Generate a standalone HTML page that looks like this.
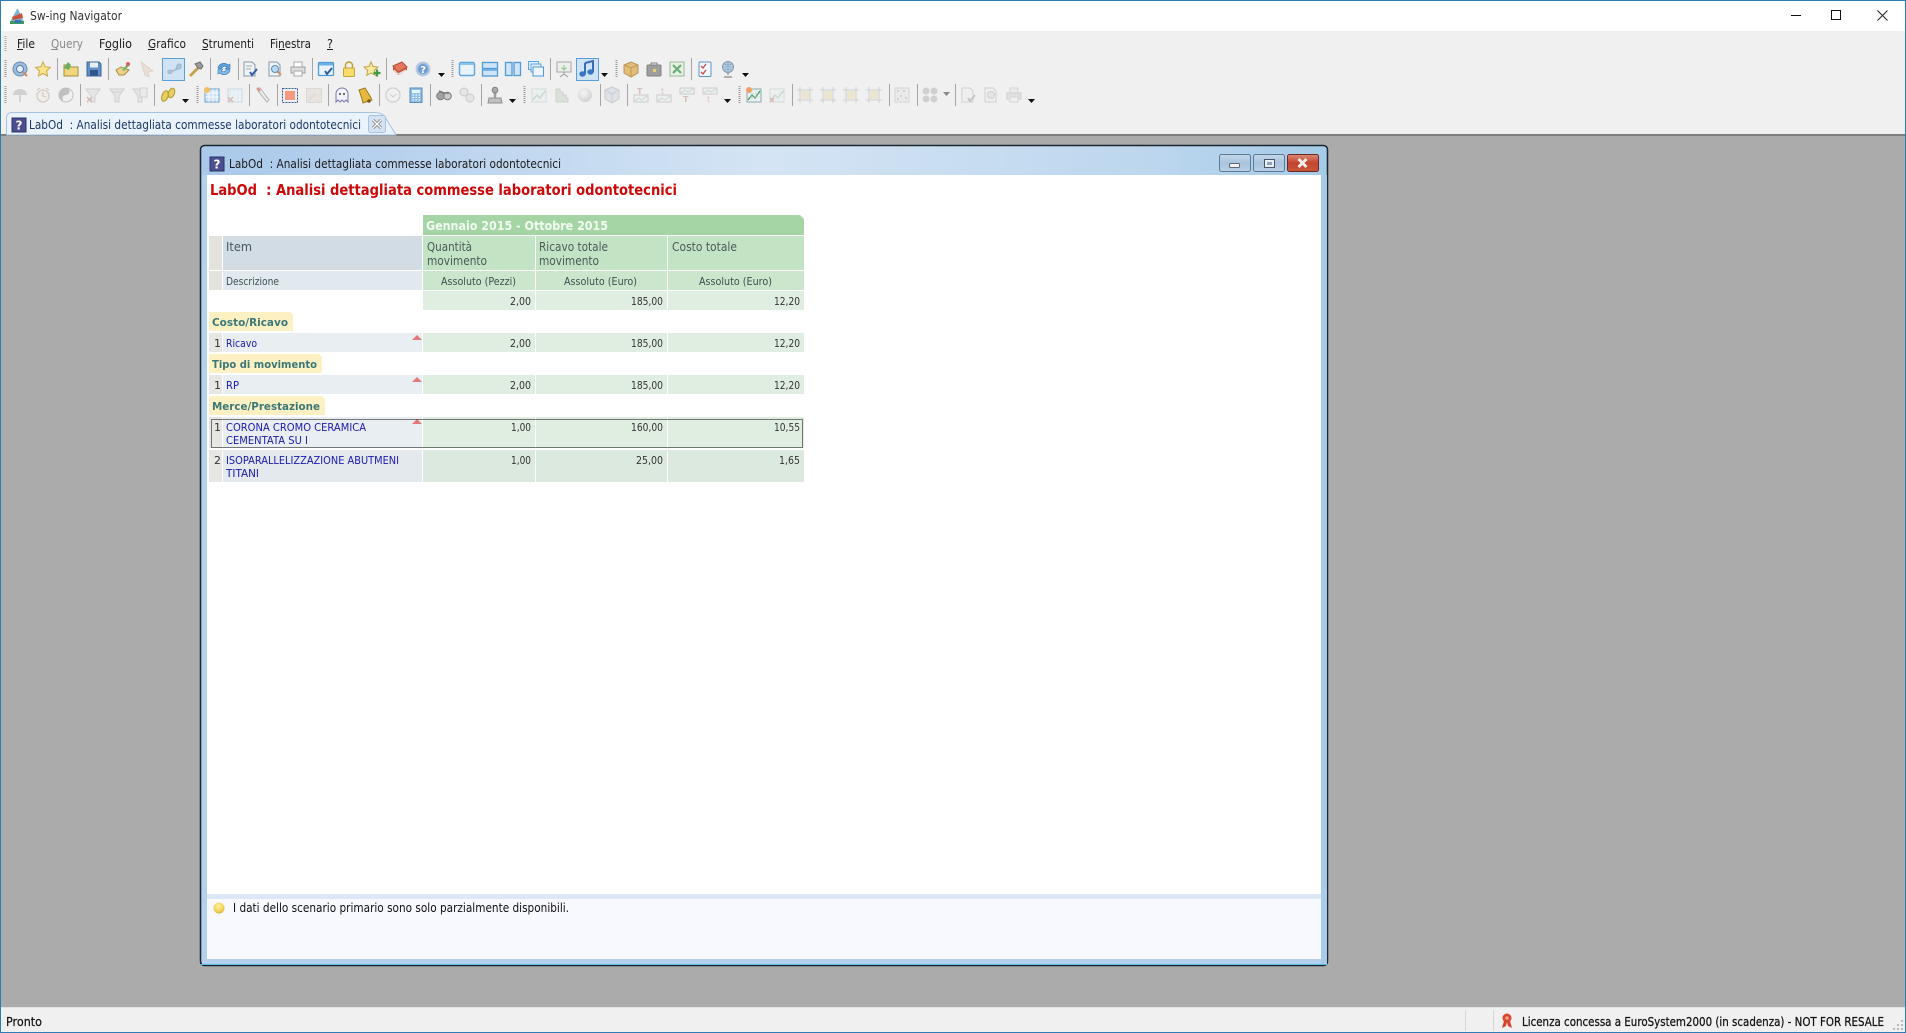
<!DOCTYPE html>
<html lang="it"><head><meta charset="utf-8"><title>Sw-ing Navigator</title>
<style>
html,body{margin:0;padding:0;width:1906px;height:1033px;overflow:hidden;background:#ababab}
svg{display:block;position:absolute;left:0;top:0}
text{font-family:"DejaVu Sans","Liberation Sans",sans-serif;font-size:12px;fill:#1c1c1c;white-space:pre}
.n{font-size:11px;fill:#333}
.h{font-size:12px;fill:#4a5a5a}
.s{font-size:11px;fill:#3c5050}
.b{font-size:11px;fill:#1b1bb0}
.g{font-weight:bold;font-size:11px;fill:#3a7878}
.m{font-size:12px;fill:#111}
.d{opacity:.3}
.sep{fill:#a4a4a4}
</style></head><body>
<svg width="1906" height="1033" viewBox="0 0 1906 1033" xmlns="http://www.w3.org/2000/svg">
<defs>
<linearGradient id="fr" x1="0" x2="1" y1="0" y2="0"><stop offset="0" stop-color="#a9c8ea"/><stop offset=".5" stop-color="#d4e4f4"/><stop offset=".85" stop-color="#bcd6ee"/><stop offset="1" stop-color="#a4cbe8"/></linearGradient>
<linearGradient id="bt" x1="0" x2="0" y1="0" y2="1"><stop offset="0" stop-color="#c5d8ea"/><stop offset=".5" stop-color="#a9c3dc"/><stop offset="1" stop-color="#b7d0e6"/></linearGradient>
<linearGradient id="rd" x1="0" x2="0" y1="0" y2="1"><stop offset="0" stop-color="#dc8a78"/><stop offset=".5" stop-color="#c4452e"/><stop offset="1" stop-color="#c9573a"/></linearGradient>
<radialGradient id="yd" cx=".45" cy=".35" r=".7"><stop offset="0" stop-color="#fff3a8"/><stop offset=".7" stop-color="#f0cf50"/><stop offset="1" stop-color="#c9a638"/></radialGradient>
<radialGradient id="sp" cx=".4" cy=".35" r=".7"><stop offset="0" stop-color="#fff"/><stop offset="1" stop-color="#888"/></radialGradient>
<symbol id="win" viewBox="0 0 16 16" overflow="visible"><rect x=".5" y="1.500" width="15" height="13" rx="1.500" fill="#eaf2fc" stroke="#5aa6e0" stroke-width="1.400"/><rect x="1" y="2" width="14" height="2" fill="#8cc4ee"/></symbol>
<symbol id="fun" viewBox="0 0 16 16" overflow="visible"><path d="M1 2h14L10 9v6H6V9z" fill="#cfcfcf" stroke="#888"/></symbol>
<symbol id="tbl" viewBox="0 0 16 16" overflow="visible"><rect x="1" y="2" width="14" height="13" fill="#cfe3f7" stroke="#6b9fcf"/><path d="M5 2v13M9 2v13M13 2v13M1 6h14M1 10h14" stroke="#fff" stroke-width=".8"/></symbol>
<symbol id="crop" viewBox="0 0 16 16" overflow="visible"><path d="M3 0v16M13 0v16M0 3h16M0 13h16" stroke="#888" stroke-width="1"/><rect x="4" y="4" width="8" height="8" fill="#e0cf88"/></symbol>
<symbol id="chart" viewBox="0 0 16 16" overflow="visible"><rect x="1" y="2" width="14" height="13" fill="#eef3f6" stroke="#8aa"/><path d="M2 13l4-5 3 3 5-7" fill="none" stroke="#3a9a50" stroke-width="1.300"/><path d="M2 7h12M2 10h12M6 3v11M10 3v11" stroke="#bcc" stroke-width=".5"/></symbol>
</defs>

<!-- app chrome -->
<rect width="1906" height="1033" fill="#2b7db3"/>
<rect x="1" y="1" width="1904" height="30" fill="#fff"/>
<rect x="1" y="31" width="1904" height="104" fill="#f0f0f0"/>
<rect x="1" y="135" width="1904" height="872" fill="#ababab"/>
<rect x="1" y="134" width="1904" height="2" fill="#7e7e7e"/>
<rect x="1" y="1007" width="1904" height="25" fill="#f0f0f0"/>
<rect x="1" y="1007" width="1904" height="1" fill="#e2e2e2"/>

<!-- title bar -->
<g transform="translate(9,7)"><path d="M1 15L8 2l1 0 6 13z" fill="#7ab4d4"/><path d="M3 10l10-4 1 5-10 2z" fill="#c8553a"/><path d="M1 14h14v3H1z" fill="#3e9a5c"/><path d="M6 13h6v3H6z" fill="#3a70c0"/></g>
<text x="30" y="20" textLength="92" lengthAdjust="spacingAndGlyphs" style="fill:#333">Sw-ing Navigator</text>
<rect x="1791" y="15" width="10" height="1" fill="#111"/>
<rect x="1831.500" y="10.500" width="9" height="9" fill="none" stroke="#111"/>
<path d="M1877.500 10.500l10 10M1887.500 10.500l-10 10" stroke="#222" fill="none"/>

<!-- menu -->
<path d="M5.500 36v16" stroke="#aaa" stroke-width="2" stroke-dasharray="1 1"/>
<text x="17" y="48" textLength="18" lengthAdjust="spacingAndGlyphs">File</text>
<text x="51" y="48" textLength="32" lengthAdjust="spacingAndGlyphs" style="fill:#8a8a8a">Query</text>
<text x="99" y="48" textLength="33" lengthAdjust="spacingAndGlyphs">Foglio</text>
<text x="148" y="48" textLength="38" lengthAdjust="spacingAndGlyphs">Grafico</text>
<text x="202" y="48" textLength="52" lengthAdjust="spacingAndGlyphs">Strumenti</text>
<text x="270" y="48" textLength="41" lengthAdjust="spacingAndGlyphs">Finestra</text>
<text x="327" y="48" textLength="6" lengthAdjust="spacingAndGlyphs">?</text>
<g fill="#222"><rect x="17" y="49" width="6" height="1"/><rect x="51" y="49" width="7" height="1" fill="#8a8a8a"/><rect x="105" y="49" width="6" height="1"/><rect x="148" y="49" width="7" height="1"/><rect x="202" y="49" width="6" height="1"/><rect x="279" y="49" width="6" height="1"/><rect x="327" y="49" width="6" height="1"/></g>

<!-- grippers -->
<g stroke="#9a9a9a" stroke-width="2" stroke-dasharray="1 1" fill="none"><path d="M5.500 60v18M452.500 60v18M616.500 60v18M5.500 86v18M197.500 86v18M524.500 86v18M739.500 86v18"/></g>
<!-- separators -->
<g class="sep"><rect x="57" y="58" width="1" height="22"/><rect x="108" y="58" width="1" height="22"/><rect x="210" y="58" width="1" height="22"/><rect x="238" y="58" width="1" height="22"/><rect x="312" y="58" width="1" height="22"/><rect x="386" y="58" width="1" height="22"/><rect x="550" y="58" width="1" height="22"/><rect x="691" y="58" width="1" height="22"/>
<rect x="80" y="84" width="1" height="22"/><rect x="154" y="84" width="1" height="22"/><rect x="249" y="84" width="1" height="22"/><rect x="277" y="84" width="1" height="22"/><rect x="328" y="84" width="1" height="22"/><rect x="379" y="84" width="1" height="22"/><rect x="430" y="84" width="1" height="22"/><rect x="481" y="84" width="1" height="22"/><rect x="600" y="84" width="1" height="22"/><rect x="627" y="84" width="1" height="22"/><rect x="792" y="84" width="1" height="22"/><rect x="889" y="84" width="1" height="22"/><rect x="917" y="84" width="1" height="22"/><rect x="955" y="84" width="1" height="22"/></g>
<!-- dropdown arrows -->
<g fill="#111"><path d="M438 73h7l-3.500 4zM601 73h7l-3.500 4zM742 73h7l-3.500 4zM182 99h7l-3.500 4zM509 99h7l-3.500 4zM724 99h7l-3.500 4zM1028 99h7l-3.500 4z"/><path d="M943 92h7l-3.500 4z" fill="#888"/></g>
<!-- highlighted buttons -->
<rect x="162.500" y="58.500" width="22" height="22" fill="#cfe3f5" stroke="#5b9fd8"/>
<rect x="576.500" y="58.500" width="22" height="22" fill="#cfe3f5" stroke="#5b9fd8"/>

<!-- ROW 1 ICONS -->
<g transform="translate(12,61)"><circle cx="8" cy="8" r="7" fill="#9dbde0" stroke="#6a8cb0"/><circle cx="8" cy="8" r="3.500" fill="#e6f0fa" stroke="#5a7fa8"/><path d="M11 11l4 4" stroke="#d48a5a" stroke-width="2"/></g>
<g transform="translate(35,61)"><path d="M8 1l2.200 4.800 5.200.6-3.800 3.500 1 5.100L8 12.500 3.400 15l1-5.100L.6 6.400l5.200-.6z" fill="#fbe38c" stroke="#c9a94e"/></g>
<g transform="translate(63,61)"><path d="M1 4h5l1 2h8v9H1z" fill="#f0d77e" stroke="#a58d3c"/><path d="M1 7l4-6 3 3-2 5z" fill="#68b060"/></g>
<g transform="translate(86,61)"><path d="M1 1h12l2 2v12H1z" fill="#5f8fc8" stroke="#3d6699"/><rect x="4" y="1.500" width="8" height="5" fill="#e8eef6"/><rect x="4" y="9" width="8" height="5.500" fill="#2f5488"/></g>
<g transform="translate(115,61)"><path d="M1 9l5-3 8 3-5 5H4z" fill="#ecd28a" stroke="#a88c48"/><path d="M7 9l6-7 2 2-6 6z" fill="#7ab96a"/><circle cx="13" cy="3" r="2" fill="#d86060"/></g>
<g transform="translate(138,61)" class="d"><path d="M3 1l12 9-5 1 1 5-4-2z" fill="#d8b9a4" stroke="#b09480"/></g>
<g transform="translate(167,61)" opacity=".6"><path d="M1 10c3-3 4 2 7-1s1-6 4-6 3 4 0 5-5 0-7 3-5 1-4-1z" fill="#9ab4cc" stroke="#7a96b0"/></g>
<g transform="translate(188,61)"><path d="M1 14L9 6l2 2-8 8z" fill="#c8a24a"/><path d="M7 3l5-2 3 4-2 3-3-1z" fill="#9a9a9a" stroke="#6f6f6f"/></g>
<g transform="translate(216,61)"><path d="M2 7a6 6 0 0 1 10-3l2-1v5h-5l2-2a4 4 0 0 0-6 2z" fill="#5aa0dc" stroke="#3d78b0" stroke-width=".6"/><path d="M14 9a6 6 0 0 1-10 3l-2 1V8h5l-2 2a4 4 0 0 0 6-2z" fill="#7ebbea" stroke="#3d78b0" stroke-width=".6"/></g>
<g transform="translate(242,61)"><path d="M2 1h8l3 3v11H2z" fill="#f0f3f6" stroke="#8a98a6"/><path d="M4 5h6M4 8h5" stroke="#a0aab4"/><path d="M8 11l2 3 5-6" fill="none" stroke="#2f5fa8" stroke-width="2"/></g>
<g transform="translate(267,61)"><path d="M2 1h8l3 3v11H2z" fill="#f0f3f6" stroke="#8a98a6"/><circle cx="8" cy="8" r="3.500" fill="#b8daf4" stroke="#5a8cb8"/><path d="M10.500 10.500l3.500 3.500" stroke="#d8905a" stroke-width="2"/></g>
<g transform="translate(290,61)"><path d="M4 1h8v5H4z" fill="#fff" stroke="#aaa"/><path d="M1 6h14v6H1z" fill="#ddd" stroke="#a0a0a0"/><path d="M4 10h8v5H4z" fill="#fafafa" stroke="#aaa"/></g>
<g transform="translate(318,61)"><rect x=".5" y="1.500" width="15" height="13" rx="1" fill="#eaf2fc" stroke="#4e9bd8" stroke-width="1.300"/><rect x="1" y="2" width="14" height="2.500" fill="#6db0e6"/><path d="M7 10l2 3 5-6" fill="none" stroke="#2d5fa0" stroke-width="2"/></g>
<g transform="translate(341,61)"><path d="M4.500 7V4.500a3.500 3.500 0 0 1 7 0V7" fill="none" stroke="#c0a030" stroke-width="1.500"/><rect x="2.500" y="7" width="11" height="8.500" rx="1" fill="#f7dc6c" stroke="#c4a53c"/></g>
<g transform="translate(364,61)"><path d="M7 1l2 4.500 5 .5-3.700 3.400 1 5L7 12 2.700 14.400l1-5L0 6l5-.5z" fill="#fbe9a0" stroke="#bfa550"/><path d="M13 8.500v7M9.500 12h7" stroke="#3f9a45" stroke-width="2.200"/></g>
<g transform="translate(392,61)"><path d="M1 5l9-4 5 5-9 5z" fill="#e4775e" stroke="#b04e38"/><path d="M1 5v4l5 5 9-5V6l-9 5z" fill="#c85a42"/><path d="M2 9l4 4 8-4" stroke="#f5e8e0" fill="none"/></g>
<g transform="translate(415,61)"><circle cx="8" cy="8" r="7" fill="#a9c3e2" stroke="#bccde0"/><circle cx="8" cy="8" r="5" fill="#6f9dd2"/><text x="5.200" y="12" style="font-size:10px;font-weight:bold;fill:#fff">?</text></g>
<use href="#win" x="459" y="61" width="16" height="16"/>
<g transform="translate(482,61)"><rect x=".5" y="1.500" width="15" height="6" fill="#cfe4f8" stroke="#4e9bd8" stroke-width="1.300"/><rect x=".5" y="9" width="15" height="6" fill="#cfe4f8" stroke="#4e9bd8" stroke-width="1.300"/></g>
<g transform="translate(505,61)"><rect x=".5" y="1.500" width="6.500" height="13" fill="#cfe4f8" stroke="#4e9bd8" stroke-width="1.300"/><rect x="9" y="1.500" width="6.500" height="13" fill="#cfe4f8" stroke="#4e9bd8" stroke-width="1.300"/></g>
<g transform="translate(528,61)"><rect x=".5" y=".5" width="10" height="8" fill="#e5effa" stroke="#5aa6e0"/><rect x="3" y="3" width="10" height="8" fill="#e5effa" stroke="#5aa6e0"/><rect x="5" y="6" width="10.500" height="9" fill="#eef5fc" stroke="#4e9bd8"/></g>
<g transform="translate(556,61)" opacity=".7"><rect x="1" y="1" width="14" height="10" fill="#eee" stroke="#888"/><path d="M8 4v5M5.500 6.500L8 9l2.500-2.500" stroke="#5cb85c" fill="none"/><path d="M8 11v2M4 16l4-3 4 3" stroke="#777" fill="none"/></g>
<g transform="translate(579,61)"><path d="M6 2l8-2v11" fill="none" stroke="#3b6cb4" stroke-width="2"/><path d="M6 2v11" stroke="#3b6cb4" stroke-width="2"/><ellipse cx="3.500" cy="13" rx="3.200" ry="2.700" fill="#3a74c4"/><ellipse cx="11.500" cy="11" rx="3.200" ry="2.700" fill="#3a74c4"/></g>
<g transform="translate(623,61)" opacity=".85"><path d="M8 1l7 3v8l-7 4-7-4V4z" fill="#e1b464" stroke="#ad853c"/><path d="M1 4l7 3 7-3M8 7v9" stroke="#b48a40" fill="none"/></g>
<g transform="translate(646,61)" opacity=".8"><rect x="1" y="4" width="14" height="11" rx="1" fill="#8a8a8a" stroke="#666"/><path d="M5 4V2h6v2" fill="none" stroke="#666"/><rect x="7" y="8" width="3" height="3" fill="#e8c95a"/></g>
<g transform="translate(669,61)" opacity=".75"><rect x="1" y="1" width="14" height="14" fill="#e6f1e0" stroke="#7aa87a"/><path d="M4 4l8 8M12 4l-8 8" stroke="#3e9a4c" stroke-width="2.200"/></g>
<g transform="translate(697,61)"><rect x="2" y="1" width="12" height="14.500" rx="1" fill="#f3f6fa" stroke="#5a94cc"/><path d="M4 5l2 2 3-4M4 11l2 2 3-4" stroke="#c0504a" fill="none" stroke-width="1.300"/></g>
<g transform="translate(720,61)" opacity=".85"><circle cx="8" cy="6" r="5.500" fill="#a8c8e4" stroke="#6f8eac"/><path d="M2.500 6h11M8 .5v11M4 2.500c2 2 6 2 8 0M4 9.500c2-2 6-2 8 0" stroke="#6f8eac" fill="none" stroke-width=".6"/><path d="M8 12v2M4 16h8" stroke="#8a8a8a" stroke-width="1.500"/></g>

<!-- ROW 2 ICONS -->
<g class="d" transform="translate(12,87)"><path d="M1 8a7 6 0 0 1 14 0z" fill="#888"/><path d="M8 8v7" stroke="#777" stroke-width="1.500"/></g>
<g class="d" transform="translate(35,87)"><circle cx="8" cy="9" r="6" fill="#f2e8dc" stroke="#9a7a62" stroke-width="1.300"/><path d="M8 5v4l3 1M2 3l3-2M14 3l-3-2" stroke="#9a7a62" fill="none" stroke-width="1.300"/></g>
<g class="d" transform="translate(58,87)"><circle cx="8" cy="8" r="7" fill="#eee" stroke="#555"/><path d="M8 1a3.500 3.500 0 0 1 0 7 3.500 3.500 0 0 0 0 7 7 7 0 0 1 0-14z" fill="#555"/></g>
<g class="d" transform="translate(85,87)"><use href="#fun" width="16" height="16"/><path d="M2 10l5 5M7 10l-5 5" stroke="#a04030" stroke-width="1.500"/></g>
<g class="d" transform="translate(109,87)"><use href="#fun" width="16" height="16"/><path d="M3 5h10" stroke="#888"/></g>
<g class="d" transform="translate(132,87)"><use href="#fun" width="16" height="16"/><rect x="8" y="1" width="7" height="9" fill="#ddd" stroke="#888"/></g>
<g transform="translate(160,87)"><ellipse cx="5" cy="9" rx="3" ry="5.500" fill="#e8cf62" stroke="#b0962e" transform="rotate(20 5 9)"/><ellipse cx="11.500" cy="6" rx="3" ry="5" fill="#e8cf62" stroke="#b0962e" transform="rotate(20 11.500 6)"/></g>
<g transform="translate(204,87)"><use href="#tbl" width="16" height="16"/><circle cx="3" cy="3" r="3" fill="#f0c060"/></g>
<g class="d" transform="translate(227,87)"><use href="#tbl" width="16" height="16"/><path d="M1 10l5 5M6 10l-5 5" stroke="#b04030" stroke-width="1.500"/></g>
<g transform="translate(255,87)" opacity=".6"><path d="M3 1l2 0 9 12-2 2L3 4z" fill="#eee" stroke="#8a8a8a"/><path d="M2 1l3 3" stroke="#d05a40" stroke-width="2.500"/></g>
<g transform="translate(282,87)"><rect x=".5" y="1.500" width="15" height="14" fill="none" stroke="#3a5aa0" stroke-dasharray="2 1"/><rect x="3" y="4" width="10" height="9" fill="#f59a80"/></g>
<g class="d" transform="translate(306,87)"><rect x=".5" y="1.500" width="15" height="14" fill="#dcc8bc" stroke="#888" stroke-dasharray="2 1"/><path d="M2 14l8-8" stroke="#999"/></g>
<g transform="translate(334,87)"><path d="M2 15V7a6 6 0 0 1 12 0v8l-2-2-2 2-2-2-2 2-2-2z" fill="#f2f2fa" stroke="#7a78a8"/><circle cx="6" cy="7" r="1" fill="#444"/><circle cx="10" cy="7" r="1" fill="#444"/></g>
<g transform="translate(357,87)"><path d="M2 3l6-2 5 8 2 4-9 3-1-4z" fill="#e5b83e" stroke="#9c7a22"/><circle cx="12" cy="14" r="1.800" fill="#7a5a1a"/></g>
<g class="d" transform="translate(385,87)"><circle cx="8" cy="8" r="7" fill="#f0f0f0" stroke="#888" stroke-width="1.300"/><path d="M5 7l3 3 3-3" stroke="#888" fill="none"/></g>
<g transform="translate(408,87)"><rect x="2" y="1" width="12" height="14.500" fill="#8fc0e8" stroke="#5a8cb8"/><rect x="4" y="3" width="8" height="3" fill="#e8f3fc"/><path d="M4.500 8h1.500M7.500 8h1.500M10.500 8h1.500M4.500 10.500h1.500M7.500 10.500h1.500M10.500 10.500h1.500M4.500 13h1.500M7.500 13h1.500M10.500 13h1.500" stroke="#fff"/></g>
<g transform="translate(436,87)" opacity=".75"><circle cx="4.500" cy="9" r="3.800" fill="#888" stroke="#555"/><circle cx="11.500" cy="9" r="3.800" fill="#bbb" stroke="#555"/><path d="M3 4l5 2 5 0" stroke="#555" fill="none" stroke-width="1.500"/></g>
<g class="d" transform="translate(459,87)"><circle cx="5" cy="5" r="4" fill="#ccc" stroke="#777"/><circle cx="11" cy="11" r="4" fill="#ccc" stroke="#777"/></g>
<g transform="translate(487,87)" opacity=".8"><path d="M6 2h4l-1 9H7z" fill="#8a8a8a"/><circle cx="8" cy="3" r="2.800" fill="#9a9a9a" stroke="#666"/><path d="M2 11h12l1 5H1z" fill="#b5b5b5" stroke="#7a7a7a"/></g>

<g class="d" transform="translate(531,87)"><use href="#chart" width="16" height="16"/></g>
<g class="d" transform="translate(554,87)"><path d="M2 2h4v3h3v3h3v3h2v4H2z" fill="#a9bf9c" stroke="#888"/></g>
<g class="d" transform="translate(577,87)"><circle cx="8" cy="8" r="7" fill="url(#sp)"/></g>
<g class="d" transform="translate(604,87)"><path d="M8 0l7 3v9l-7 4-7-4V3z" fill="#b8c4d0" stroke="#778"/><path d="M1 3l7 4 7-4M8 7v9" stroke="#778" fill="none"/></g>
<g class="d" transform="translate(633,87)"><rect x="1" y="8" width="14" height="7" fill="#eee" stroke="#777"/><path d="M2 14l4-3 3 2 5-4" stroke="#5a7" fill="none"/><text x="4" y="7" style="font-size:8px;font-weight:bold;fill:#a05040">T</text></g>
<g class="d" transform="translate(656,87)"><rect x="1" y="8" width="14" height="7" fill="#eee" stroke="#777"/><path d="M2 14l4-3 3 2 5-4" stroke="#5a7" fill="none"/><text x="5" y="7" style="font-size:8px;fill:#a05040">t</text></g>
<g class="d" transform="translate(679,87)"><rect x="1" y="1" width="14" height="6" fill="#eee" stroke="#777"/><path d="M2 6l4-3 3 2 5-3" stroke="#5a7" fill="none"/><text x="4" y="15" style="font-size:8px;font-weight:bold;fill:#a05040">T</text></g>
<g class="d" transform="translate(702,87)"><rect x="1" y="1" width="14" height="6" fill="#eee" stroke="#777"/><path d="M2 6l4-3 3 2 5-3" stroke="#5a7" fill="none"/><text x="5" y="15" style="font-size:8px;fill:#a05040">t</text></g>
<g transform="translate(746,87)"><use href="#chart" width="16" height="16"/><circle cx="3" cy="3" r="3" fill="#f0a060"/></g>
<g class="d" transform="translate(769,87)"><use href="#chart" width="16" height="16"/><path d="M1 11l4 4M5 11l-4 4" stroke="#b04030" stroke-width="1.500"/></g>
<g class="d"><use href="#crop" x="797" y="87" width="16" height="16"/><use href="#crop" x="820" y="87" width="16" height="16"/><use href="#crop" x="843" y="87" width="16" height="16"/><use href="#crop" x="866" y="87" width="16" height="16"/></g>
<g class="d" transform="translate(894,87)"><rect x="1" y="1" width="14" height="14" fill="#ddd" stroke="#999"/><path d="M3 3h2v2H3zM9 3h2v2H9zM6 8h2v2H6zM11 10h2v2h-2zM3 11h2v2H3z" fill="#888"/></g>
<g class="d" transform="translate(922,87)" fill="#888"><circle cx="4" cy="4" r="3.500"/><circle cx="12" cy="4" r="3.500"/><circle cx="4" cy="12" r="3.500"/><circle cx="12" cy="12" r="3.500"/></g>
<g class="d" transform="translate(960,87)"><path d="M2 1h8l3 3v11H2z" fill="#eee" stroke="#888"/><path d="M8 11l2 3 5-6" fill="none" stroke="#666" stroke-width="2"/></g>
<g class="d" transform="translate(983,87)"><path d="M2 1h8l3 3v11H2z" fill="#eee" stroke="#888"/><circle cx="8" cy="8" r="3.500" fill="#ccc" stroke="#888"/></g>
<g class="d" transform="translate(1006,87)"><path d="M4 1h8v5H4z" fill="#ddd" stroke="#999"/><path d="M1 6h14v6H1z" fill="#bbb" stroke="#8f8f8f"/><path d="M4 10h8v5H4z" fill="#eee" stroke="#999"/></g>

<!-- tab -->
<path d="M6.500 135V118q0-5.500 6-5.500H374q9 0 12 6L396 135z" fill="#eaf3fc" stroke="#a6c2de"/>
<rect x="12" y="118" width="14" height="14" fill="#4b4f8e" stroke="#2f3168"/>
<text x="15.500" y="129.500" style="font-size:12px;font-weight:bold;fill:#fff">?</text>
<text x="29" y="129" textLength="332" lengthAdjust="spacingAndGlyphs" style="fill:#1d3768">LabOd  : Analisi dettagliata commesse laboratori odontotecnici</text>
<rect x="368.500" y="115.500" width="17" height="17" rx="2" fill="#d4e3f3" stroke="#a9c3dd"/>
<path d="M373 120l8 8M381 120l-8 8" stroke="#777" stroke-width="3"/><path d="M373 120l8 8M381 120l-8 8" stroke="#fff" stroke-width="1.400"/>

<!-- child window -->
<rect x="200.500" y="145.500" width="1127" height="820" rx="4" fill="url(#fr)" stroke="#1b2630" stroke-width="1.500"/>
<rect x="201" y="964" width="1126" height="1" fill="#54bfdc"/>
<rect x="202" y="175" width="5" height="789" fill="#b4d0ec"/>
<rect x="1321" y="175" width="6" height="789" fill="#a9cbea"/>
<rect x="207" y="959" width="1114" height="5" fill="#b4d0ec"/>
<rect x="210" y="157" width="14" height="14" fill="#4b4f8e" stroke="#2f3168"/>
<text x="213.500" y="168.500" style="font-size:12px;font-weight:bold;fill:#fff">?</text>
<text x="229" y="168" textLength="332" lengthAdjust="spacingAndGlyphs" style="fill:#1b1b1b">LabOd  : Analisi dettagliata commesse laboratori odontotecnici</text>
<rect x="1219.500" y="154.500" width="31" height="17" rx="2" fill="url(#bt)" stroke="#5d7a94"/>
<rect x="1229.500" y="163.500" width="10" height="4" rx="1" fill="#f2f2f2" stroke="#5a6a7a"/>
<rect x="1253.500" y="154.500" width="31" height="17" rx="2" fill="url(#bt)" stroke="#5d7a94"/>
<rect x="1264.500" y="159.500" width="10" height="8" fill="#e8eef4" stroke="#46566a"/><rect x="1267" y="162" width="5" height="3" fill="#8aa4bd"/>
<rect x="1287.500" y="154.500" width="31" height="17" rx="2" fill="url(#rd)" stroke="#6a2a20"/>
<path d="M1298.500 159l8 8M1306.500 159l-8 8" stroke="#f5f0ec" stroke-width="2.800"/>

<!-- client -->
<rect x="207" y="175" width="1114" height="784" fill="#fff"/>
<text x="210" y="195" textLength="467" lengthAdjust="spacingAndGlyphs" style="font-size:15px;font-weight:bold;fill:#cc0808">LabOd  : Analisi dettagliata commesse laboratori odontotecnici</text>

<!-- table backgrounds -->
<path d="M423 215H800l4 4v16H423z" fill="#a5d5a5"/>
<g fill="#c3e3c5"><rect x="423" y="236" width="112" height="34"/><rect x="536" y="236" width="131" height="34"/><rect x="668" y="236" width="136" height="34"/></g>
<g fill="#cbe6cd"><rect x="423" y="271" width="112" height="19"/><rect x="536" y="271" width="131" height="19"/><rect x="668" y="271" width="136" height="19"/></g>
<rect x="209" y="236" width="13" height="34" fill="#e3e2dd"/><rect x="223" y="236" width="199" height="34" fill="#d2dce4"/>
<rect x="209" y="271" width="13" height="19" fill="#e3e2dd"/><rect x="223" y="271" width="199" height="19" fill="#e2e9ee"/>
<g fill="#e0eee2"><rect x="423" y="291" width="112" height="19"/><rect x="536" y="291" width="131" height="19"/><rect x="668" y="291" width="136" height="19"/>
<rect x="423" y="333" width="112" height="19"/><rect x="536" y="333" width="131" height="19"/><rect x="668" y="333" width="136" height="19"/>
<rect x="423" y="375" width="112" height="19"/><rect x="536" y="375" width="131" height="19"/><rect x="668" y="375" width="136" height="19"/>
<rect x="423" y="417" width="112" height="31"/><rect x="536" y="417" width="131" height="31"/><rect x="668" y="417" width="136" height="31"/></g>
<g fill="#dce9df"><rect x="423" y="450" width="112" height="32"/><rect x="536" y="450" width="131" height="32"/><rect x="668" y="450" width="136" height="32"/></g>
<g fill="#e6e6e2"><rect x="209" y="333" width="13" height="19"/><rect x="209" y="375" width="13" height="19"/><rect x="209" y="417" width="13" height="31"/><rect x="209" y="450" width="13" height="32"/></g>
<g fill="#e8eef2"><rect x="223" y="333" width="199" height="19"/><rect x="223" y="375" width="199" height="19"/><rect x="223" y="417" width="199" height="31"/></g>
<rect x="223" y="450" width="199" height="32" fill="#e3e9ed"/>
<!-- group tags -->
<g fill="#fdf1c4"><path d="M209 312H290l3 3V331H209z"/><path d="M209 354H319l3 3V373H209z"/><path d="M209 396H322l3 3V415H209z"/></g>
<!-- red markers -->
<g fill="#e27a7a"><path d="M412 340l5-5 5 5z"/><path d="M412 382l5-5 5 5z"/><path d="M412 424l5-5 5 5z"/></g>
<rect x="211.500" y="419.500" width="591" height="28" fill="none" stroke="#000" stroke-dasharray="1 1" shape-rendering="crispEdges"/>

<!-- table text -->
<text x="426" y="230" textLength="182" lengthAdjust="spacingAndGlyphs" style="font-weight:bold;font-size:12px;fill:#f2fbf2">Gennaio 2015 - Ottobre 2015</text>
<text class="h" x="226" y="251" textLength="26" lengthAdjust="spacingAndGlyphs">Item</text>
<text class="h" x="427" y="251" textLength="45" lengthAdjust="spacingAndGlyphs">Quantità</text><text class="h" x="427" y="265" textLength="60" lengthAdjust="spacingAndGlyphs">movimento</text>
<text class="h" x="539" y="251" textLength="69" lengthAdjust="spacingAndGlyphs">Ricavo totale</text><text class="h" x="539" y="265" textLength="60" lengthAdjust="spacingAndGlyphs">movimento</text>
<text class="h" x="672" y="251" textLength="65" lengthAdjust="spacingAndGlyphs">Costo totale</text>
<text class="s" x="226" y="285" textLength="53" lengthAdjust="spacingAndGlyphs">Descrizione</text>
<text class="s" x="441" y="285" textLength="75" lengthAdjust="spacingAndGlyphs">Assoluto (Pezzi)</text>
<text class="s" x="564" y="285" textLength="73" lengthAdjust="spacingAndGlyphs">Assoluto (Euro)</text>
<text class="s" x="699" y="285" textLength="73" lengthAdjust="spacingAndGlyphs">Assoluto (Euro)</text>
<text class="n" x="510" y="305" textLength="21" lengthAdjust="spacingAndGlyphs">2,00</text><text class="n" x="631" y="305" textLength="32" lengthAdjust="spacingAndGlyphs">185,00</text><text class="n" x="774" y="305" textLength="26" lengthAdjust="spacingAndGlyphs">12,20</text>
<text class="g" x="212" y="326" textLength="76" lengthAdjust="spacingAndGlyphs">Costo/Ricavo</text>
<text class="n" x="214" y="347">1</text><text class="b" x="226" y="347" textLength="31" lengthAdjust="spacingAndGlyphs">Ricavo</text>
<text class="n" x="510" y="347" textLength="21" lengthAdjust="spacingAndGlyphs">2,00</text><text class="n" x="631" y="347" textLength="32" lengthAdjust="spacingAndGlyphs">185,00</text><text class="n" x="774" y="347" textLength="26" lengthAdjust="spacingAndGlyphs">12,20</text>
<text class="g" x="212" y="368" textLength="105" lengthAdjust="spacingAndGlyphs">Tipo di movimento</text>
<text class="n" x="214" y="389">1</text><text class="b" x="226" y="389" textLength="13" lengthAdjust="spacingAndGlyphs">RP</text>
<text class="n" x="510" y="389" textLength="21" lengthAdjust="spacingAndGlyphs">2,00</text><text class="n" x="631" y="389" textLength="32" lengthAdjust="spacingAndGlyphs">185,00</text><text class="n" x="774" y="389" textLength="26" lengthAdjust="spacingAndGlyphs">12,20</text>
<text class="g" x="212" y="410" textLength="108" lengthAdjust="spacingAndGlyphs">Merce/Prestazione</text>
<text class="n" x="214" y="431">1</text><text class="b" x="226" y="431" textLength="140" lengthAdjust="spacingAndGlyphs">CORONA CROMO CERAMICA</text><text class="b" x="226" y="444" textLength="82" lengthAdjust="spacingAndGlyphs">CEMENTATA SU I</text>
<text class="n" x="511" y="431" textLength="20" lengthAdjust="spacingAndGlyphs">1,00</text><text class="n" x="631" y="431" textLength="32" lengthAdjust="spacingAndGlyphs">160,00</text><text class="n" x="774" y="431" textLength="26" lengthAdjust="spacingAndGlyphs">10,55</text>
<text class="n" x="214" y="464">2</text><text class="b" x="226" y="464" textLength="173" lengthAdjust="spacingAndGlyphs">ISOPARALLELIZZAZIONE ABUTMENI</text><text class="b" x="226" y="477" textLength="33" lengthAdjust="spacingAndGlyphs">TITANI</text>
<text class="n" x="511" y="464" textLength="20" lengthAdjust="spacingAndGlyphs">1,00</text><text class="n" x="636" y="464" textLength="27" lengthAdjust="spacingAndGlyphs">25,00</text><text class="n" x="779" y="464" textLength="21" lengthAdjust="spacingAndGlyphs">1,65</text>

<!-- message area -->
<rect x="207" y="894" width="1114" height="5" fill="#dce8f8"/>
<rect x="207" y="899" width="1114" height="60" fill="#f8f9ff"/>
<circle cx="219" cy="908" r="5.500" fill="url(#yd)"/>
<text class="m" x="233" y="912" textLength="336" lengthAdjust="spacingAndGlyphs">I dati dello scenario primario sono solo parzialmente disponibili.</text>

<!-- status bar -->
<text x="6" y="1026" textLength="36" lengthAdjust="spacingAndGlyphs" style="fill:#111;stroke:#111;stroke-width:.2">Pronto</text>
<rect x="1465" y="1010" width="1" height="21" fill="#d6d6d6"/><rect x="1493" y="1010" width="1" height="21" fill="#d6d6d6"/>
<circle cx="1507" cy="1018" r="4.500" fill="#d8442c"/><path d="M1504 1021l-2 7 4-2 1-4zM1510 1021l2 7-4-2-1-4z" fill="#d8442c"/><circle cx="1507" cy="1018" r="1.800" fill="#f3a48e"/>
<text x="1522" y="1026" textLength="362" lengthAdjust="spacingAndGlyphs" style="fill:#111;stroke:#111;stroke-width:.25">Licenza concessa a EuroSystem2000 (in scadenza) - NOT FOR RESALE</text>
<g fill="#b8b8b8"><rect x="1901" y="1028" width="2" height="2"/><rect x="1897" y="1028" width="2" height="2"/><rect x="1893" y="1028" width="2" height="2"/><rect x="1901" y="1024" width="2" height="2"/><rect x="1897" y="1024" width="2" height="2"/><rect x="1901" y="1020" width="2" height="2"/></g>
</svg>
</body></html>
